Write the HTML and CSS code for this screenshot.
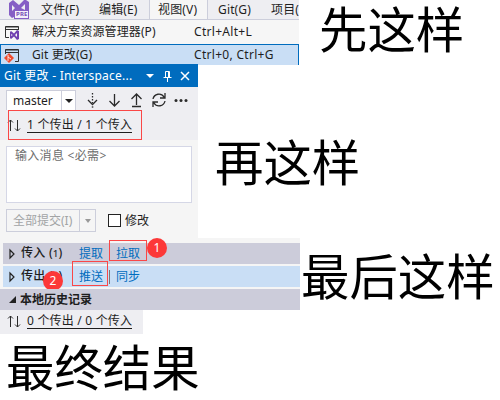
FILE: index.html
```html
<!DOCTYPE html>
<html lang="zh-CN">
<head>
<meta charset="utf-8">
<title>Git 更改</title>
<link rel="stylesheet" href="styles.css">
</head>
<body>
<section class="step step-menu">
  <div class="menu">
    <nav class="menubar">
      <svg class="logo" width="32" height="20" viewBox="0 0 32 20">
        <path d="M9 3 13 0l6 5 5-5h2l3 2v8H14v7l-2 1-3-3z" fill="#865fc5"/>
        <path d="M12 5v6l3-3zM25 4l-4 4 4 2z" fill="#eeeef2"/>
        <rect x="14.500" y="10.500" width="14" height="8" fill="#f4f1fa" stroke="#865fc5"/>
      </svg>
      <span class="pre">PRE</span>
      <span class="tab tab-file">文件(F)</span>
      <span class="tab tab-edit">编辑(E)</span>
      <span class="tab tab-view">视图(V)</span>
      <span class="tab tab-git">Git(G)</span>
      <span class="tab tab-project">项目(</span>
    </nav>
    <div class="entry">
      <svg width="16" height="15" viewBox="0 0 16 15"><path d="M13.500 5V1.500H.5v11H4M.5 4.500h13M.5 2h13" fill="none" stroke="#303030"/><path d="m5 7 1-1 3 2.500L12 5l2 1v8l-2 1-3-3.500L6 14l-1-1zm1.300 1.800v2.500l1.300-1.300zM12 8l-2 2 2 2z" fill="#7040b0" fill-rule="evenodd"/></svg>
      <span class="name">解决方案资源管理器(P)</span><span class="keys">Ctrl+Alt+L</span>
    </div>
    <div class="entry selected">
      <svg width="16" height="15" viewBox="0 0 16 15"><path d="M.5 6V1.500h13v12H10M.5 4.500h13M.5 2h13" fill="none" stroke="#303030"/><path d="m4 5 5 5-5 5-5-5z" fill="#ef4a2c"/><path d="M3 7v6M3 9l3 2" fill="none" stroke="#fff" stroke-width=".8"/></svg>
      <span class="name">Git 更改(G)</span><span class="keys">Ctrl+0, Ctrl+G</span>
    </div>
  </div>
  <h2 class="caption">先这样</h2>
</section>
<section class="step step-panel">
  <div class="panel">
    <header class="title">
      <span class="title-text">Git 更改 - Interspace...</span>
      <svg width="48" height="12" viewBox="0 0 48 12" fill="none" stroke="#fff"><path d="M0 4h8L4 8z" fill="#fff" stroke="none"/><path d="M19.500 7V1.500h4V7M17.500 7.500h8M21.500 8v4" /><path d="M22.500 2v5"/><path d="m35 2 8 8m0-8-8 8" stroke-width="1.500"/></svg>
    </header>
    <div class="tools">
      <div class="branch"><span>master</span><i><b class="arrow"></b></i></div>
      <svg class="actions" width="104" height="18" viewBox="0 0 104 18" fill="none" stroke="#2b2b2b" stroke-width="1.300">
        <path d="M4.500 2v10" stroke-dasharray="1.500 1.500"/><path d="m0 9 4.500 4.500L9 9"/><path d="M3.800 16h1.500"/>
        <path d="M26.500 3v12M21.500 10l5 5 5-5"/>
        <path d="M48.500 14V3M43.500 8l5-5 5 5M44 15.500h9"/>
        <path d="M65 8a6 6 0 0 1 11-2l1 1M77 2v5h-5M77 10a6 6 0 0 1-11 2l-1-1M65 16v-5h5"/>
        <g fill="#2b2b2b" stroke="none"><circle cx="88" cy="9.500" r="1.500"/><circle cx="93" cy="9.500" r="1.500"/><circle cx="98" cy="9.500" r="1.500"/></g>
      </svg>
    </div>
    <div class="sync boxed">
      <svg width="12" height="13" viewBox="0 0 12 13" fill="none" stroke="#2b2b2b"><path d="M2.500 12V1M0 3.500 2.500 1 5 3.500M9.500 1v11M7 9.500 9.500 12 12 9.500"/></svg>
      <span class="link">1 个传出 / 1 个传入</span>
    </div>
    <div class="commit">
      <div class="message">输入消息 &lt;必需&gt;</div>
      <div class="commit-row">
        <div class="commit-button"><span>全部提交(I)</span><i><b class="arrow"></b></i></div>
        <span class="check"></span><span class="amend">修改</span>
      </div>
    </div>
  </div>
  <h2 class="caption">再这样</h2>
</section>
<section class="step step-groups">
  <div class="groups">
    <div class="group">
      <svg width="7" height="10" viewBox="0 0 7 10"><path d="M1 1v8l4-4z" fill="none" stroke="#222" stroke-width="1.200"/></svg>
      <span class="label">传入 (<small>1</small>)</span><a class="fetch">提取</a><a class="pull">拉取</a>
      <span class="box box-pull"></span><span class="badge badge-one">1</span>
    </div>
    <div class="group current">
      <svg width="7" height="10" viewBox="0 0 7 10"><path d="M1 1v8l4-4z" fill="none" stroke="#222" stroke-width="1.200"/></svg>
      <span class="label">传出 (<small>1</small>)</span><a class="fetch">推送</a><a class="pull">同步</a>
      <span class="box box-push"></span><span class="divider"></span><span class="badge badge-two">2</span>
    </div>
    <div class="group history">
      <svg width="7" height="7" viewBox="0 0 7 7"><path d="M7 0v7H0z" fill="#222"/></svg>
      <span class="label">本地历史记录</span>
    </div>
  </div>
  <h2 class="caption">最后这样</h2>
</section>
<section class="step-result">
  <div class="sync">
    <svg width="12" height="13" viewBox="0 0 12 13" fill="none" stroke="#2b2b2b"><path d="M2.500 12V1M0 3.500 2.500 1 5 3.500M9.500 1v11M7 9.500 9.500 12 12 9.500"/></svg>
    <span class="link">0 个传出 / 0 个传入</span>
  </div>
  <h2 class="caption">最终结果</h2>
</section>
</body>
</html>
```
FILE: styles.css
```css
* { box-sizing: border-box; }
body {
  margin: 0;
  width: 500px;
  height: 400px;
  overflow: hidden;
  background: #fff;
  color: #1e1e1e;
  font: 12px/16px "Noto Sans", "Noto Sans CJK SC", sans-serif;
  white-space: nowrap;
}
svg { display: block; flex: none; overflow: visible; }
span, a { flex: none; }
.step { display: flex; align-items: flex-start; }
.caption {
  width: max-content;
  margin: 0;
  color: #000;
  font: 400 48.4px/52px "Noto Sans CJK SC", sans-serif;
}

/* View menu */
.step-menu { height: 64px; }
.step-menu .caption { margin: 1px 0 0 20px; }
.menu { width: 299px; height: 65px; flex: none; background: #f6f6f6; }
.menubar {
  position: relative;
  display: flex;
  height: 20px;
  overflow: hidden;
  background: #eeeef2;
  border-bottom: 1px solid #cccedb;
}
.pre {
  position: absolute;
  left: 16px;
  top: 10px;
  color: #7550b5;
  font: bold 6px/9px "Noto Sans", sans-serif;
  letter-spacing: .2px;
}
.tab { height: 20px; line-height: 19px; padding-left: 9px; letter-spacing: .15px; }
.tab-file { width: 58px; }
.tab-edit { width: 59px; }
.tab-view { width: 59px; background: #f6f6f6; border: solid #cccedb; border-width: 0 1px; padding-left: 8px; }
.tab-git { width: 54px; padding-left: 10px; }
.tab-project { width: 37px; }
.entry { display: flex; align-items: center; height: 24px; padding-left: 5px; }
.entry .name { width: 162px; margin-left: 11px; letter-spacing: .1px; }
.entry .keys { letter-spacing: .3px; }
.selected { height: 21px; padding-left: 4px; background: #c9def5; border: 1px solid #006cbe; border-bottom: 0; }

/* Git changes panel */
.step-panel { height: 174px; position: relative; }
.step-panel .caption { margin: 70px 0 0 17px; }
.panel { width: 198px; height: 174px; flex: none; background: #f5f5f5; }
.title { display: flex; align-items: center; height: 23px; padding-left: 4px; background: #006cbe; color: #fff; }
.title-text { width: 142px; letter-spacing: .25px; }
.tools { display: flex; height: 23px; align-items: flex-end; padding-left: 6px; background: #eeeef2; }
.branch { display: flex; width: 70px; height: 21px; margin-bottom: -1px; background: #fff; border: 1px solid #cccedb; line-height: 19px; }
.branch span { width: 54px; padding-left: 6px; }
.branch i, .commit-button i { display: flex; flex: 1; align-items: center; justify-content: center; border-left: 1px solid #cccedb; }
.arrow { border: 4px solid transparent; border-top-color: #222; border-bottom: 0; }
.actions { margin: 0 0 1px 12px; }
.sync { display: flex; align-items: center; }
.sync svg { margin-right: 7px; }
.link { line-height: 14px; letter-spacing: .2px; border-bottom: 1px solid #1e1e1e; }
.boxed { height: 30px; padding-left: 8px; background: #eeeef2; position: relative; }
.boxed::after { content: ""; position: absolute; left: 8px; top: 0; width: 132px; height: 28px; border: 1px solid #fa4747; }
.commit { padding: 6px 6px 0; }
.message { width: 186px; height: 57px; padding: 1px 8px; background: #fff; border: 1px solid #d5d7e6; color: #6d6d6d; letter-spacing: .3px; }
.commit-row { display: flex; align-items: center; margin-top: 6px; }
.commit-button { display: flex; width: 90px; height: 23px; border: 1px solid #cccedb; color: #a2a4a5; line-height: 22px; }
.commit-button span { width: 72px; padding-left: 6px; }
.commit-button .arrow { border-top-color: #999; border-left-width: 3px; border-right-width: 3px; }
.check { width: 13px; height: 13px; margin: 0 4px 0 12px; background: #fff; border: 1px solid #222; }

/* Incoming and outgoing groups */
.step-groups { height: 72px; }
.step-groups .caption { margin: 10px 0 0 1px; }
.groups { width: 300px; flex: none; padding: 5px 0 0 3px; background: #f5f5f5; }
.group { position: relative; display: flex; align-items: center; height: 21px; margin-bottom: 2px; padding-left: 6px; background: #ccccda; }
.group .label { width: 58px; margin-left: 5px; font-weight: 500; letter-spacing: .3px; }
.group small { font-size: 9px; }
.group a { width: 37px; color: #006cbe; }
.current { background: #c9def5; }
.history { margin: 0 0 0 -3px; padding-left: 9px; }
.history .label { margin-left: 4px; font-weight: 600; letter-spacing: 0; }
.box { position: absolute; border: 1px solid #fa4747; }
.box-pull { left: 106px; top: -3px; width: 38px; height: 21px; }
.box-push { left: 69px; top: -5px; width: 36px; height: 25px; }
.divider { position: absolute; left: 106px; top: 4px; width: 1px; height: 14px; background: #777; }
.badge { position: absolute; width: 20px; height: 20px; border-radius: 50%; background: #fc3838; color: #fff; line-height: 20px; text-align: center; }
.badge-one { left: 144px; top: -5px; }
.badge-two { left: 40px; top: 5px; }

/* Result */
.step-result .sync { width: 143px; height: 24px; padding: 0 0 2px 8px; background: #eeeef2; }
.step-result .caption { margin: 5px 0 0 6px; }
```
